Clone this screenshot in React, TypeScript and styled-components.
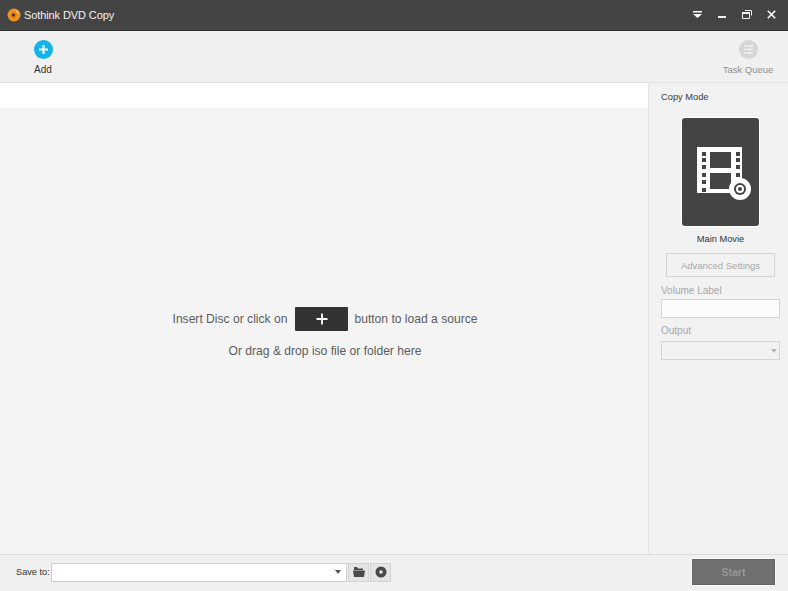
import { FC, ReactNode } from "react";
import styled, { createGlobalStyle } from "styled-components";

const GlobalStyle = createGlobalStyle`
  html, body { margin: 0; padding: 0; }
  body { font-family: "Liberation Sans", Arial, sans-serif; background: #f4f4f4; }
  * { box-sizing: border-box; }
`;

const Window = styled.div`
  width: 788px;
  height: 591px;
  display: flex;
  flex-direction: column;
  overflow: hidden;
`;

const TitleBar = styled.div`
  height: 31px;
  flex: none;
  display: flex;
  align-items: center;
  padding: 0 12px 1px 7px;
  background: #444444;
  border-bottom: 1px solid #333333;
`;

const AppName = styled.span`
  margin-left: 3px;
  font-size: 11px;
  letter-spacing: -0.1px;
  color: #f2f2f2;
  flex: 1;
`;

const WindowButtons = styled.div`
  display: flex;
  align-items: center;
  gap: 15px;
`;

const Toolbar = styled.div`
  height: 52px;
  flex: none;
  display: flex;
  justify-content: space-between;
  background: #f0f0f0;
  border-bottom: 1px solid #e2e2e2;
  padding: 9px 15px 0 23px;
`;

const ToolButton = styled.div<{ $muted?: boolean }>`
  width: ${(p) => (p.$muted ? "50px" : "40px")};
  display: flex;
  flex-direction: column;
  align-items: center;
  gap: 5px;
  font-size: ${(p) => (p.$muted ? "9.5px" : "10px")};
  white-space: nowrap;
  color: ${(p) => (p.$muted ? "#8f8f8f" : "#333333")};
`;

const Body = styled.div`
  flex: 1;
  min-height: 0;
  display: flex;
`;

const Content = styled.div`
  flex: 1;
  display: flex;
  flex-direction: column;
`;

const WhiteStrip = styled.div`
  height: 25px;
  background: #ffffff;
`;

const DropArea = styled.div`
  flex: 1;
  display: flex;
  flex-direction: column;
  align-items: center;
  padding-top: 199px;
  background: #f4f4f4;
  font-size: 12.1px;
  color: #5c5c5c;
`;

const InsertRow = styled.div`
  display: flex;
  align-items: center;
  gap: 7px;
  height: 24px;
  padding-left: 2px;
`;

const PlusButton = styled.div`
  width: 53px;
  height: 24px;
  margin: 0 -1px 0 1px;
  display: flex;
  align-items: center;
  justify-content: center;
  background: #333333;
  border-radius: 1px;
`;

const DropHint = styled.div`
  margin-top: 13px;
  padding-left: 2px;
`;

const SidePanel = styled.div`
  width: 140px;
  flex: none;
  display: flex;
  flex-direction: column;
  padding: 9px 8px 0 12px;
  background: #f2f2f2;
  border-left: 1px solid #e2e2e2;
`;

const SectionTitle = styled.div`
  font-size: 9.3px;
  line-height: 11px;
  color: #3c3c3c;
`;

const ModeCard = styled.div`
  width: 77px;
  height: 108px;
  margin: 15px 0 0 21px;
  display: flex;
  align-items: center;
  justify-content: center;
  background: #444444;
  border-radius: 3px;
  box-shadow: 0 0 0 1px #ffffff;
`;

const ModeName = styled.div`
  margin-top: 8px;
  text-align: center;
  font-size: 9.3px;
  line-height: 11px;
  color: #333333;
`;

const GhostButton = styled.div`
  width: 109px;
  height: 24px;
  margin: 8px 0 0 5px;
  display: flex;
  align-items: center;
  justify-content: center;
  font-size: 9.5px;
  color: #a8a8a8;
  border: 1px solid #d4d4d4;
`;

const FieldLabel = styled.div<{ $gap: number }>`
  margin-top: ${(p) => p.$gap}px;
  height: 13px;
  line-height: 13px;
  font-size: 10px;
  color: #a8a8a8;
`;

const TextBox = styled.div`
  width: 119px;
  height: 19px;
  margin-top: 2px;
  background: #fbfbfb;
  border: 1px solid #d4d4d4;
`;

const SelectBox = styled.div`
  width: 119px;
  height: 19px;
  margin-top: 4px;
  display: flex;
  align-items: center;
  justify-content: flex-end;
  padding-right: 2px;
  border: 1px solid #d4d4d4;
`;

const Arrow = styled.span<{ $light?: boolean }>`
  width: 0;
  height: 0;
  border-left: 3px solid transparent;
  border-right: 3px solid transparent;
  border-top: 4px solid ${(p) => (p.$light ? "#b5b5b5" : "#555555")};
`;

const BottomBar = styled.div`
  height: 37px;
  flex: none;
  display: flex;
  align-items: center;
  padding: 0 13px 2px 16px;
  background: #f0f0f0;
  border-top: 1px solid #dcdcdc;
`;

const SaveLabel = styled.span`
  width: 35px;
  font-size: 9.2px;
  color: #333333;
  white-space: nowrap;
`;

const PathBox = styled.div`
  width: 296px;
  height: 19px;
  display: flex;
  align-items: center;
  justify-content: flex-end;
  padding-right: 5px;
  background: #ffffff;
  border: 1px solid #cfcfcf;
`;

const SquareButton = styled.div`
  width: 21px;
  height: 19px;
  margin-left: 1px;
  display: flex;
  align-items: center;
  justify-content: center;
  background: #e4e4e4;
  border: 1px solid #d2d2d2;
`;

const StartButton = styled.div`
  width: 83px;
  height: 26px;
  margin-left: auto;
  display: flex;
  align-items: center;
  justify-content: center;
  font-size: 10.5px;
  font-weight: bold;
  color: #989898;
  background: #707070;
  border: 1px solid #666666;
  box-shadow: 0 0 0 1px #fafafa;
`;

const Glyph: FC<{ w: number; h: number; children: ReactNode }> = ({ w, h, children }) => (
  <svg width={w} height={h} viewBox={`0 0 ${w} ${h}`} style={{ display: "block", flex: "none" }}>
    {children}
  </svg>
);

const AppLogo = () => (
  <Glyph w={14} h={14}>
    <circle cx="7" cy="7" r="6.5" fill="#ee9322" />
    <circle cx="6.5" cy="7" r="3" fill="#d97f1e" />
    <circle cx="6.5" cy="7" r="1.5" fill="#4a2c10" />
    <path d="M9 2.500a5 5 0 0 1 2.500 3" stroke="#ffd9a0" strokeWidth="1" fill="none" />
  </Glyph>
);

const FilmDiscIcon = () => {
  const holes = [5, 11, 18, 26, 33, 41];
  return (
    <svg width="54" height="53" viewBox="0 0 54 53" style={{ display: "block", margin: "2px 0 0 7px" }}>
      <rect x="0" y="0" width="45" height="46" fill="#ffffff" />
      <rect x="13" y="5" width="21" height="16" fill="#444444" />
      <rect x="13" y="26" width="21" height="16" fill="#444444" />
      {holes.map((y) => (
        <g key={y}>
          <rect x="5" y={y} width="4" height="4" fill="#444444" />
          <rect x="39" y={y} width="4" height="4" fill="#444444" />
        </g>
      ))}
      <circle cx="43" cy="42" r="11" fill="#ffffff" />
      <circle cx="43" cy="42" r="6" fill="#444444" />
      <circle cx="43" cy="42" r="4" fill="#ffffff" />
      <circle cx="43" cy="42" r="2" fill="#444444" />
    </svg>
  );
};

const App: FC = () => (
  <Window>
    <GlobalStyle />
    <TitleBar>
      <AppLogo />
      <AppName>Sothink DVD Copy</AppName>
      <WindowButtons>
        <Glyph w={10} h={7}>
          <rect x="0" y="0" width="9" height="1.500" fill="#fff" />
          <path d="M0 3h9L4.500 7z" fill="#fff" />
        </Glyph>
        <Glyph w={9} h={9}>
          <rect x="0" y="6" width="8" height="2" fill="#eee" />
        </Glyph>
        <Glyph w={10} h={9}>
          <path d="M3 .5h6.500v5M.5 2.500h7v6h-7z" stroke="#eee" strokeWidth="1" fill="none" />
          <rect x="0" y="2" width="8" height="2" fill="#eee" />
        </Glyph>
        <Glyph w={9} h={9}>
          <path d="M.8.8l7.400 7.400M8.200.8l-7.400 7.400" stroke="#fff" strokeWidth="1.600" />
        </Glyph>
      </WindowButtons>
    </TitleBar>
    <Toolbar>
      <ToolButton>
        <Glyph w={19} h={19}>
          <circle cx="9.5" cy="9.5" r="9.5" fill="#14b4e8" />
          <path d="M9.500 5v9M5 9.500h9" stroke="#fff" strokeWidth="2" />
        </Glyph>
        Add
      </ToolButton>
      <ToolButton $muted>
        <Glyph w={19} h={19}>
          <circle cx="9.5" cy="9.5" r="9.5" fill="#d6d6d6" />
          <path d="M5 6h2M8 6h6M5 9.500h2M8 9.500h6M5 13h2M8 13h6" stroke="#f4f4f4" strokeWidth="1.500" />
        </Glyph>
        Task Queue
      </ToolButton>
    </Toolbar>
    <Body>
      <Content>
        <WhiteStrip />
        <DropArea>
          <InsertRow>
            <span>Insert Disc or click on</span>
            <PlusButton>
              <Glyph w={12} h={12}>
                <path d="M6 .5v11M.5 6h11" stroke="#fff" strokeWidth="1.800" />
              </Glyph>
            </PlusButton>
            <span>button to load a source</span>
          </InsertRow>
          <DropHint>Or drag &amp; drop iso file or folder here</DropHint>
        </DropArea>
      </Content>
      <SidePanel>
        <SectionTitle>Copy Mode</SectionTitle>
        <ModeCard>
          <FilmDiscIcon />
        </ModeCard>
        <ModeName>Main Movie</ModeName>
        <GhostButton>Advanced Settings</GhostButton>
        <FieldLabel $gap={7}>Volume Label</FieldLabel>
        <TextBox />
        <FieldLabel $gap={6}>Output</FieldLabel>
        <SelectBox>
          <Arrow $light />
        </SelectBox>
      </SidePanel>
    </Body>
    <BottomBar>
      <SaveLabel>Save to:</SaveLabel>
      <PathBox>
        <Arrow />
      </PathBox>
      <SquareButton>
        <Glyph w={12} h={10}>
          <path d="M1 0h3l1 1.500h5v1.500h-9zM0 3.500h12l-1 6.500h-10z" fill="#484848" />
        </Glyph>
      </SquareButton>
      <SquareButton>
        <Glyph w={12} h={12}>
          <circle cx="6" cy="6" r="5.500" fill="#484848" />
          <circle cx="6" cy="6" r="1.800" fill="#e4e4e4" />
        </Glyph>
      </SquareButton>
      <StartButton>Start</StartButton>
    </BottomBar>
  </Window>
);

export default App;
